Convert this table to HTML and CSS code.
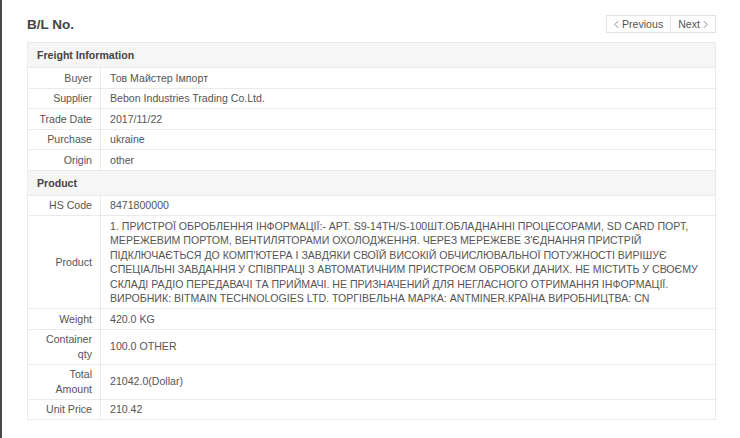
FILE: index.html
```html
<!DOCTYPE html>
<html>
<head>
<meta charset="utf-8">
<link rel="stylesheet" href="styles.css">
</head>
<body>
<div class="page">
  <div class="top">
    <h1 class="title">B/L No.</h1>
    <div class="pager">
      <span class="btn"><svg class="chev" viewBox="0 0 6 10" width="5" height="9"><path d="M5 1 L1 5 L5 9" fill="none" stroke="#666" stroke-width="0.9"/></svg>Previous</span><span class="btn">Next<svg class="chev chev-r" viewBox="0 0 6 10" width="5" height="9"><path d="M1 1 L5 5 L1 9" fill="none" stroke="#666" stroke-width="0.9"/></svg></span>
    </div>
  </div>
  <table class="info">
    <tr><th class="section" colspan="2">Freight Information</th></tr>
    <tr><td class="label">Buyer</td><td class="value">Тов Майстер Імпорт</td></tr>
    <tr><td class="label">Supplier</td><td class="value">Bebon Industries Trading Co.Ltd.</td></tr>
    <tr><td class="label">Trade Date</td><td class="value">2017/11/22</td></tr>
    <tr><td class="label">Purchase</td><td class="value">ukraine</td></tr>
    <tr><td class="label">Origin</td><td class="value">other</td></tr>
    <tr><th class="section" colspan="2">Product</th></tr>
    <tr><td class="label">HS Code</td><td class="value">8471800000</td></tr>
    <tr><td class="label">Product</td><td class="value">1. ПРИСТРОЇ ОБРОБЛЕННЯ ІНФОРМАЦІЇ:- АРТ. S9-14TH/S-100ШТ.ОБЛАДНАННІ ПРОЦЕСОРАМИ, SD CARD ПОРТ, МЕРЕЖЕВИМ ПОРТОМ, ВЕНТИЛЯТОРАМИ ОХОЛОДЖЕННЯ. ЧЕРЕЗ МЕРЕЖЕВЕ З'ЄДНАННЯ ПРИСТРІЙ ПІДКЛЮЧАЄТЬСЯ ДО КОМП'ЮТЕРА І ЗАВДЯКИ СВОЇЙ ВИСОКІЙ ОБЧИСЛЮВАЛЬНОЇ ПОТУЖНОСТІ ВИРІШУЄ СПЕЦІАЛЬНІ ЗАВДАННЯ У СПІВПРАЦІ З АВТОМАТИЧНИМ ПРИСТРОЄМ ОБРОБКИ ДАНИХ. НЕ МІСТИТЬ У СВОЄМУ СКЛАДІ РАДІО ПЕРЕДАВАЧІ ТА ПРИЙМАЧІ. НЕ ПРИЗНАЧЕНИЙ ДЛЯ НЕГЛАСНОГО ОТРИМАННЯ ІНФОРМАЦІЇ. ВИРОБНИК: BITMAIN TECHNOLOGIES LTD. ТОРГІВЕЛЬНА МАРКА: ANTMINER.КРАЇНА ВИРОБНИЦТВА: CN</td></tr>
    <tr><td class="label">Weight</td><td class="value">420.0 KG</td></tr>
    <tr><td class="label">Container<br>qty</td><td class="value">100.0 OTHER</td></tr>
    <tr><td class="label">Total<br>Amount</td><td class="value">21042.0(Dollar)</td></tr>
    <tr><td class="label">Unit Price</td><td class="value">210.42</td></tr>
  </table>
</div>
</body>
</html>
```
FILE: styles.css
```css
html, body {
  margin: 0;
  padding: 0;
  background: #fff;
}
body {
  font-family: "Liberation Sans", Arial, sans-serif;
  color: #555;
  font-size: 10.6px;
  border-left: 2px solid #4a4a4a;
  min-height: 438px;
  box-sizing: border-box;
}
.page {
  padding: 15px 24px 0 25px;
}
.top {
  display: flex;
  justify-content: space-between;
  align-items: center;
  height: 18px;
  margin-bottom: 9px;
}
.title {
  margin: 0;
  font-size: 13.5px;
  font-weight: bold;
  color: #444;
  line-height: 18px;
  position: relative;
  top: 1px;
}
.pager {
  display: flex;
}
.btn {
  display: inline-flex;
  align-items: center;
  height: 18px;
  box-sizing: border-box;
  border: 1px solid #e3e3e3;
  padding: 0 7px;
  font-size: 10.6px;
  color: #555;
  background: #fff;
}
.btn + .btn {
  border-left: none;
}
.chev {
  margin-right: 3px;
}
.chev-r {
  margin-right: 0;
  margin-left: 3px;
}
.info {
  width: 689px;
  border-collapse: collapse;
  border: 1px solid #eaeaea;
}
.info th, .info td {
  border: 1px solid #eaeaea;
  line-height: 14.5px;
  vertical-align: middle;
}
.section {
  background: #f6f6f6;
  text-align: left;
  font-weight: bold;
  color: #444;
  padding: 5px 9px 4.5px;
  font-size: 10.6px;
}
.label {
  width: 73px;
  box-sizing: border-box;
  text-align: right;
  padding: 2.5px 8px 2.5px 4px;
  color: #555;
}
.value {
  padding: 2.5px 9px;
  color: #555;
}
```
